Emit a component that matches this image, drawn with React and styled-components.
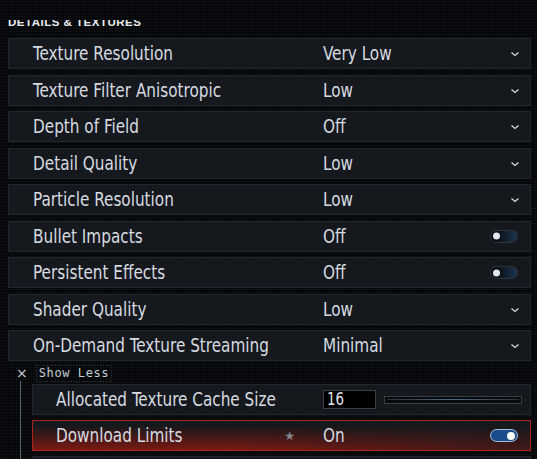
import React from "react";
import styled, { createGlobalStyle } from "styled-components";

const GlobalStyle = createGlobalStyle`
  html, body {
    margin: 0;
    padding: 0;
    background: #050608;
  }
  body {
    font-family: "DejaVu Sans Condensed", "Liberation Sans", sans-serif;
    overflow: hidden;
  }
`;

const Page = styled.div`
  width: 537px;
  height: 459px;
  overflow: hidden;
  box-sizing: border-box;
  padding: 0 6px 0 8px;
  background-color: #050608;
  background-image: radial-gradient(circle, #101317 0.7px, transparent 1.2px);
  background-size: 3px 3px;
`;

const TitleClip = styled.div`
  margin-top: 20px;
  height: 18px;
  overflow: hidden;
`;

const Title = styled.h2`
  margin: -4px 0 0 0;
  font-family: "Liberation Sans", sans-serif;
  font-weight: 700;
  font-size: 11.5px;
  line-height: 12px;
  letter-spacing: 0.5px;
  color: #e9ecef;
`;

const List = styled.div`
  display: flex;
  flex-direction: column;
  gap: 5.5px;
`;

const Row = styled.div`
  box-sizing: border-box;
  height: 31px;
  display: grid;
  grid-template-columns: ${(p) => (p.$sub ? "267px" : "290px")} 1fr 30px;
  align-items: center;
  padding: 0 10px 0 ${(p) => (p.$sub ? "23px" : "24px")};
  border: 1px solid ${(p) => (p.$selected ? "#a8261d" : "#23262c")};
  background: ${(p) =>
    p.$selected
      ? "linear-gradient(to right, rgba(21,24,29,0) 40%, rgba(21,24,29,0.55) 100%), linear-gradient(to bottom, #15181d 15%, #7a1912 100%)"
      : "#15181d"};
  color: #d6dbe0;
  font-size: 19.5px;
`;

const Narrow = styled.span`
  display: inline-block;
  white-space: nowrap;
  transform: scaleX(0.87);
  transform-origin: left center;
`;

const Label = styled.div`
  display: flex;
  align-items: center;
  padding-right: 28px;
  white-space: nowrap;
`;

const Star = styled.span`
  margin-left: auto;
  font-family: "DejaVu Sans", sans-serif;
  font-size: 12px;
  color: #86898f;
`;

const Value = styled.div`
  white-space: nowrap;
`;

const Control = styled.div`
  display: flex;
  justify-content: flex-end;
  align-items: center;
`;

const Toggle = styled.div`
  box-sizing: border-box;
  width: 28px;
  height: 13px;
  margin-right: 2px;
  border-radius: 7px;
  position: relative;
  border: 1.5px solid ${(p) => (p.$on ? "#a9bcd4" : "#2f343b")};
  background: ${(p) =>
    p.$on ? "#1a4b8a" : "linear-gradient(to right, #0a0d11 20%, #1c3550 100%)"};

  &::after {
    content: "";
    position: absolute;
    top: 50%;
    ${(p) => (p.$on ? "right: 2px;" : "left: 2px;")}
    width: ${(p) => (p.$on ? "8px" : "7px")};
    height: ${(p) => (p.$on ? "8px" : "7px")};
    border-radius: 50%;
    transform: translateY(-50%);
    background: ${(p) => (p.$on ? "#ffffff" : "#e4e8ee")};
  }
`;

const Chevron = () => (
  <svg width="10" height="6" viewBox="0 0 10 6" style={{ marginTop: 1 }}>
    <polyline points="1.5,1.5 5,4.5 8.5,1.5" fill="none" stroke="#d6dbe0" strokeWidth="1.3" />
  </svg>
);

const ShowLessRow = styled.div`
  display: flex;
  align-items: center;
  height: 16px;
  margin: 4px 0 0 0;
  gap: 8px;
  padding-left: 8px;
`;

const Close = styled.span`
  font-family: "DejaVu Sans", sans-serif;
  font-size: 14px;
  color: #c8d0d8;
  line-height: 1;
`;

const ShowLessButton = styled.span`
  font-family: "DejaVu Sans Mono", monospace;
  font-size: 12px;
  letter-spacing: 0.6px;
  color: #c4ced6;
  padding: 1px 2px;
  border: 1px dotted #2c3036;
  line-height: 13px;
`;

const SubGroup = styled.div`
  display: flex;
  flex-direction: column;
  gap: 5px;
  margin-left: 12px;
  padding: 3px 0 0 11px;
  border-left: 1px solid #5a5e65;
`;

const ValueWithSlider = styled.div`
  grid-column: 2 / 4;
  display: flex;
  align-items: center;
  gap: 8px;
  margin-right: -2px;
`;

const NumberBox = styled.div`
  box-sizing: border-box;
  width: 53px;
  height: 19px;
  background: #000;
  border: 1px solid #3b3f45;
  font-size: 17px;
  line-height: 17px;
  padding-left: 3px;
  color: #e4e8ec;
`;

const Slider = styled.div`
  flex: 1;
  box-sizing: border-box;
  height: 8px;
  border: 1px solid #3a3e44;
  background: #08090b;
  display: flex;
  align-items: center;
  padding: 0 2px;

  &::before {
    content: "";
    flex: 1;
    height: 1px;
    background: linear-gradient(to right, #2a3038, #4f6a86 50%, #2a3038);
  }
`;

const settings = [
  { label: "Texture Resolution", value: "Very Low", type: "select" },
  { label: "Texture Filter Anisotropic", value: "Low", type: "select" },
  { label: "Depth of Field", value: "Off", type: "select" },
  { label: "Detail Quality", value: "Low", type: "select" },
  { label: "Particle Resolution", value: "Low", type: "select" },
  { label: "Bullet Impacts", value: "Off", type: "toggle" },
  { label: "Persistent Effects", value: "Off", type: "toggle" },
  { label: "Shader Quality", value: "Low", type: "select" },
  { label: "On-Demand Texture Streaming", value: "Minimal", type: "select" },
];

export default function App() {
  return (
    <>
      <GlobalStyle />
      <Page>
        <TitleClip>
          <Title>DETAILS &amp; TEXTURES</Title>
        </TitleClip>
        <List>
          {settings.map((s) => (
            <Row key={s.label}>
              <Label>
                <Narrow>{s.label}</Narrow>
              </Label>
              <Value>
                <Narrow>{s.value}</Narrow>
              </Value>
              <Control>{s.type === "toggle" ? <Toggle /> : <Chevron />}</Control>
            </Row>
          ))}
        </List>
        <ShowLessRow>
          <Close>×</Close>
          <ShowLessButton>Show Less</ShowLessButton>
        </ShowLessRow>
        <SubGroup>
          <Row $sub>
            <Label>
              <Narrow>Allocated Texture Cache Size</Narrow>
            </Label>
            <ValueWithSlider>
              <NumberBox>
                <Narrow>16</Narrow>
              </NumberBox>
              <Slider />
            </ValueWithSlider>
          </Row>
          <Row $sub $selected>
            <Label>
              <Narrow>Download Limits</Narrow>
              <Star>★</Star>
            </Label>
            <Value>
              <Narrow>On</Narrow>
            </Value>
            <Control>
              <Toggle $on />
            </Control>
          </Row>
          <Row $sub />
        </SubGroup>
      </Page>
    </>
  );
}
